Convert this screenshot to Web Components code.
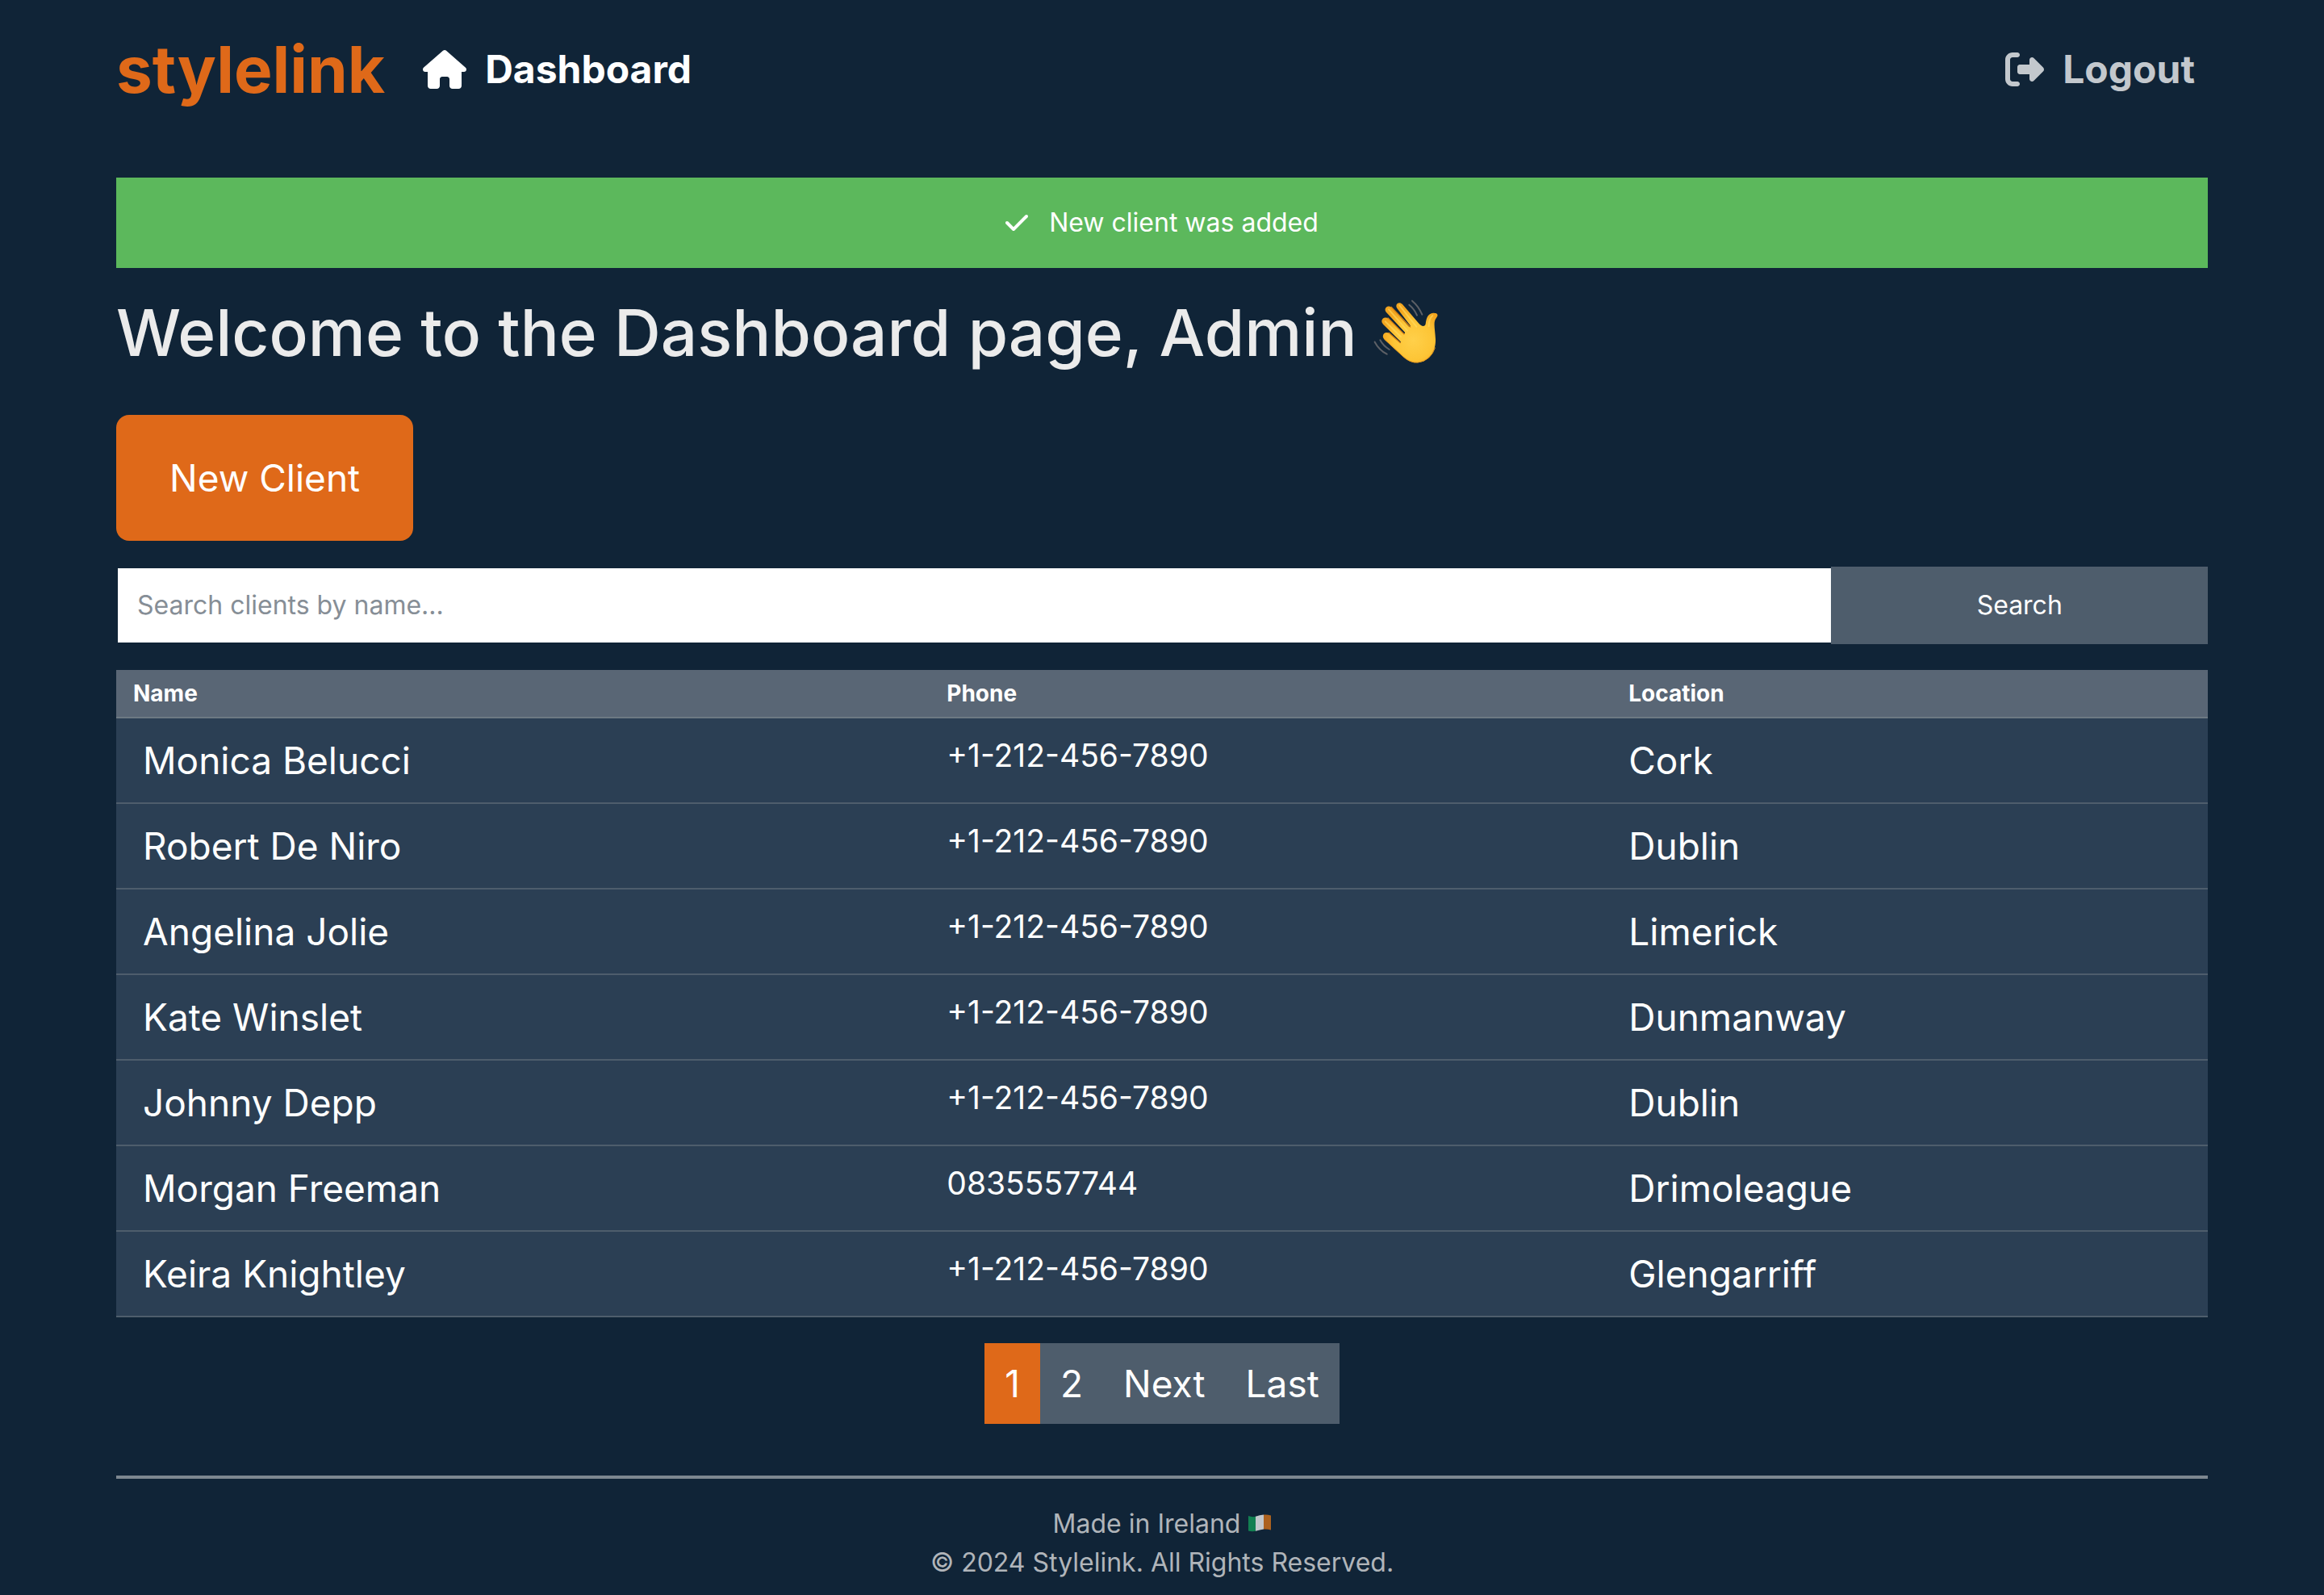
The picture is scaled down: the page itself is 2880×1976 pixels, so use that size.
<!DOCTYPE html>
<html lang="en">
<head>
<meta charset="utf-8">
<title>Dashboard | stylelink</title>
<meta name="viewport" content="width=device-width, initial-scale=1">
<style>
  :root {
    --bg: #102437;
    --accent: #df6919;
    --panel: #4e5d6c;
    --row: #2b3f54;
    --head: #596675;
    --text: #ebebeb;
  }
  body {
    margin: 0;
    background: var(--bg);
    color: var(--text);
    font: 400 32px/48px Inter, "Liberation Sans", sans-serif;
  }
</style>
</head>
<body>
<app-shell>
  <site-header slot="header"></site-header>
  <flash-message>New client was added</flash-message>
  <welcome-title>Welcome to the Dashboard page, Admin</welcome-title>
  <action-button>New Client</action-button>
  <search-bar></search-bar>
  <client-table></client-table>
  <page-nav></page-nav>
  <site-footer slot="footer"></site-footer>
</app-shell>

<script>
const define = (name, html) => {
  const template = document.createElement('template');
  template.innerHTML = html;
  customElements.define(name, class extends HTMLElement {
    constructor() {
      super();
      this.attachShadow({ mode: 'open' }).append(template.content.cloneNode(true));
    }
  });
};

define('app-shell', `
  <style>
    :host { display: flex; flex-direction: column; padding: 0 5%; }
    main { display: flex; flex-direction: column; }
  </style>
  <slot name="header"></slot>
  <main><slot></slot></main>
  <slot name="footer"></slot>`);

define('site-header', `
  <style>
    :host { display: block; }
    nav { display: flex; align-items: center; padding: 26px 16px 74px 0; font-size: 48px; line-height: 72px; font-weight: 700; }
    a { display: flex; align-items: center; gap: 23px; text-decoration: none; color: #c3c8cd; }
    .brand { color: var(--accent); font-size: 80px; line-height: 120px; margin-right: 47px; }
    .current { color: #fff; }
    .logout { margin-left: auto; }
    svg { height: 48px; fill: currentColor; display: block; }
  </style>
  <nav aria-label="Main">
    <a class="brand" href="#">stylelink</a>
    <a class="current" href="#" aria-current="page">
      <svg viewBox="0 0 576 512" width="54" aria-hidden="true"><path d="M575.800 255.500c0 18-15 32.100-32 32.100h-32l.7 160.200c0 2.700-.2 5.400-.5 8.100V472c0 22.100-17.900 40-40 40H456c-1.100 0-2.200 0-3.300-.1c-1.400 .1-2.800 .1-4.200 .1H416 392c-22.100 0-40-17.900-40-40V448 384c0-17.700-14.300-32-32-32H256c-17.700 0-32 14.300-32 32v64 24c0 22.100-17.900 40-40 40H160 128.100c-1.500 0-3-.1-4.500-.2c-1.200 .1-2.400 .2-3.600 .2H104c-22.100 0-40-17.900-40-40V360c0-.9 0-1.900 .1-2.800V287.600H32c-18 0-32-14-32-32.100c0-9 3-17 10-24L266.400 8c7-7 15-8 22-8s15 2 21 7L564.800 231.500c8 7 12 15 11 24z"/></svg>
      <span>Dashboard</span>
    </a>
    <a class="logout" href="#">
      <svg viewBox="0 0 512 512" width="48" aria-hidden="true"><path d="M377.900 105.900L500.700 228.700c7.200 7.200 11.300 17.100 11.300 27.300s-4.100 20.100-11.300 27.300L377.900 406.100c-6.400 6.400-15 9.900-24 9.900c-18.700 0-33.900-15.200-33.900-33.900l0-62.100-128 0c-17.700 0-32-14.300-32-32l0-64c0-17.700 14.300-32 32-32l128 0 0-62.100c0-18.700 15.200-33.900 33.900-33.900c9 0 17.600 3.600 24 9.900zM160 96L96 96c-17.700 0-32 14.300-32 32l0 256c0 17.700 14.300 32 32 32l64 0c17.700 0 32 14.300 32 32s-14.300 32-32 32l-64 0c-53 0-96-43-96-96L0 128C0 75 43 32 96 32l64 0c17.700 0 32 14.300 32 32s-14.300 32-32 32z"/></svg>
      <span>Logout</span>
    </a>
  </nav>`);

define('flash-message', `
  <style>
    :host { display: block; }
    p { margin: 0; padding: 32px; display: flex; align-items: center; justify-content: center; gap: 26px; background: #5cb85c; color: #fff; }
    svg { width: 28px; height: 32px; fill: currentColor; }
  </style>
  <p role="status">
    <svg viewBox="0 0 448 512" aria-hidden="true"><path d="M438.600 105.400c12.500 12.500 12.500 32.800 0 45.300l-256 256c-12.500 12.500-32.800 12.500-45.300 0l-128-128c-12.500-12.500-12.500-32.800 0-45.300s32.800-12.500 45.300 0L160 338.700 393.400 105.400c12.500-12.500 32.800-12.500 45.300 0z"/></svg>
    <span><slot></slot></span>
  </p>`);

define('welcome-title', `
  <style>
    :host { display: block; }
    h1 { display: flex; align-items: flex-start; gap: 20px; margin: 32px 0 54px; font-size: 80px; line-height: 96px; font-weight: 500; }
    svg { width: 80px; height: 80px; flex: none; margin-top: 6px; }
  </style>
  <h1><span><slot></slot></span>
    <svg viewBox="182 60 240 240" role="img" aria-label="waving hand">
      <defs>
        <radialGradient id="skin" cx="330" cy="215" r="120" gradientUnits="userSpaceOnUse">
          <stop offset="0" stop-color="#ffd04a"/><stop offset=".6" stop-color="#fdc536"/><stop offset="1" stop-color="#f3a51f"/>
        </radialGradient>
      </defs>
      <g fill="none" stroke="#5d6066" stroke-width="6" stroke-linecap="round">
        <path d="M326 68Q350 88 363 119M315 83Q334 98 344 122M187 221Q203 251 232 266M207 214Q219 236 241 249"/>
      </g>
      <path fill="url(#skin)" d="M270 96C260 81 277 68 290 81L349 150C357 161 373 168 376 154C379 132 384 115 404 113C420 112 425 121 416 131C403 146 411 171 413 211C415 264 379 299 342 298C319 297 302 286 285 269L223 212C208 196 226 178 242 190L279 223C283 227 286 222 282 218L218 155C204 140 222 122 238 135L293 188C298 193 302 188 297 183L230 111C217 96 236 79 251 94L313 163C317 168 322 164 318 158Z"/>
      <g fill="none" stroke-linecap="round">
        <path stroke="#d98212" stroke-width="4" d="M239 187L282 224M236 132L296 192M248 91L319 165"/>
        <path stroke="#ed9c1c" stroke-width="3" d="M224 211L292 274Q318 299 346 297Q396 290 411 243"/>
        <path stroke="#ffdc62" stroke-width="6" opacity=".6" d="M279 85L342 164M239 100L308 179M226 145L284 202M402 123Q388 133 388 163"/>
      </g>
    </svg>
  </h1>`);

define('action-button', `
  <style>
    :host { display: flex; margin-bottom: 32px; }
    button { padding: 42px 66px; border: 0; border-radius: 16px; background: var(--accent); color: #fff; font: inherit; font-size: 46px; line-height: 72px; }
  </style>
  <button type="button"><slot></slot></button>`);

define('search-bar', `
  <style>
    :host { display: block; margin-bottom: 32px; }
    form { display: flex; }
    input, button { box-sizing: border-box; margin: 0; font: inherit; border-radius: 0; }
    input { flex: 1; min-width: 0; padding: 22px 24px; border: 2px solid transparent; border-right: 0; background: #fff; background-clip: padding-box; color: #2b3e50; }
    input::placeholder { color: #868e96; opacity: 1; }
    button { width: 18%; border: 0; background: var(--panel); color: #fff; }
  </style>
  <form role="search" onsubmit="return false">
    <input type="text" placeholder="Search clients by name..." aria-label="Search clients by name">
    <button type="submit">Search</button>
  </form>`);

const clients = [
  ['Monica Belucci', '+1-212-456-7890', 'Cork'],
  ['Robert De Niro', '+1-212-456-7890', 'Dublin'],
  ['Angelina Jolie', '+1-212-456-7890', 'Limerick'],
  ['Kate Winslet', '+1-212-456-7890', 'Dunmanway'],
  ['Johnny Depp', '+1-212-456-7890', 'Dublin'],
  ['Morgan Freeman', '0835557744', 'Drimoleague'],
  ['Keira Knightley', '+1-212-456-7890', 'Glengarriff'],
];

define('client-table', `
  <style>
    :host { display: block; margin-bottom: 32px; }
    table { width: 100%; border-collapse: separate; border-spacing: 0; table-layout: fixed; color: #fff; }
    th { padding: 8px 21px; text-align: left; font-size: 28px; line-height: 42px; font-weight: 700; background: var(--head); border-bottom: 2px solid #6c7983; }
    th:nth-child(1) { width: 38.9%; }
    th:nth-child(2) { width: 32.6%; }
    th, td { box-sizing: border-box; }
    td { padding: 16px 21px; vertical-align: top; font-size: 46px; line-height: 72px; background: var(--row); border-bottom: 2px solid #4e5d6c; }
    td:nth-child(1) { padding-left: 33px; }
    td:nth-child(2) { font-size: 39px; line-height: 60px; }
    a { color: inherit; text-decoration: none; }
  </style>
  <table>
    <thead><tr><th scope="col">Name</th><th scope="col">Phone</th><th scope="col">Location</th></tr></thead>
    <tbody>${clients.map(([name, phone, place]) =>
      `<tr><td><a href="#">${name}</a></td><td>${phone}</td><td>${place}</td></tr>`).join('')}</tbody>
  </table>`);

define('page-nav', `
  <style>
    :host { display: block; }
    ul { display: flex; justify-content: center; margin: 0; padding: 0; list-style: none; font-size: 46px; line-height: 72px; }
    a { display: block; padding: 14px 25px; background: var(--panel); color: #fff; text-decoration: none; }
    a[aria-current] { background: var(--accent); }
  </style>
  <nav aria-label="Pages">
    <ul>
      <li><a href="#" aria-current="page">1</a></li>
      <li><a href="#">2</a></li>
      <li><a href="#">Next</a></li>
      <li><a href="#">Last</a></li>
    </ul>
  </nav>`);

define('site-footer', `
  <style>
    :host { display: block; margin-top: 64px; color: #b0b5ba; text-align: center; }
    hr { height: 4px; margin: 0 0 32px; border: 0; background: #7d8790; }
    p { margin: 0; }
    .made { display: flex; justify-content: center; align-items: center; gap: 10px; }
    svg { width: 28px; height: 24px; }
  </style>
  <footer>
    <hr>
    <p class="made"><span>Made in Ireland</span>
      <svg viewBox="0 0 28 24" role="img" aria-label="Flag of Ireland">
        <path fill="#128052" d="M0 2Q5 4 10 2.500V20.500Q5 22 0 20.500Z"/>
        <path fill="#c3c8cc" d="M9 2.800Q14 1 19 .5V18.500Q14 19.500 9 20.800Z"/>
        <path fill="#ad621f" d="M19 .5Q24 0 28 1.500V19.500Q24 18 19 18.500Z"/>
      </svg>
    </p>
    <p>© 2024 Stylelink. All Rights Reserved.</p>
  </footer>`);
</script>
</body>
</html>
